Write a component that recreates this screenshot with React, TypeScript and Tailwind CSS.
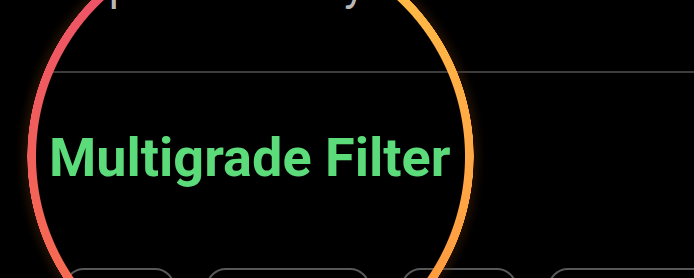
import React from "react";

export default function App() {
  const pills = [111, 164, 116, 200];
  return (
    <div className="relative w-[694px] h-[278px] overflow-hidden bg-black font-['Roboto',sans-serif]">
      <div className="flex flex-col">
        <div className="-mt-[37px] pl-[62px] text-[44px] leading-[44px] text-[#b8b8b8] whitespace-nowrap">
          Exposure Study
        </div>
        <div className="mt-[64px] ml-[50px] h-[2px] bg-[#3c3c3c]" />
        <h1 className="mt-[58px] pl-[49px] text-[54px] leading-[54px] font-bold text-[#5cdb7a] whitespace-nowrap">
          Multigrade Filter
        </h1>
        <div className="mt-[83px] ml-[64px] flex gap-[31px]">
          {pills.map((w, i) => (
            <div
              key={i}
              style={{ width: w }}
              className="h-[44px] shrink-0 rounded-[20px] border-2 border-[#585858]"
            />
          ))}
        </div>
      </div>

      {/* highlight ring overlay */}
      <div className="pointer-events-none absolute left-[27px] top-[-67px] h-[447px] w-[447px] rounded-full shadow-[0_0_10px_4px_rgba(90,45,15,0.4),inset_0_0_10px_4px_rgba(90,45,15,0.4)]" />
      <div className="pointer-events-none absolute left-[27px] top-[-67px] h-[447px] w-[447px] rounded-full bg-[conic-gradient(from_0deg,#ffc547_0deg,#ffb845_45deg,#ffa846_90deg,#ff9d40_121deg,#fb8348_180deg,#f76a52_239deg,#f1605b_270deg,#ee5466_315deg,#ee5068_345deg,#ffc547_360deg)] [mask:radial-gradient(circle_closest-side,transparent_calc(100%-9.5px),black_calc(100%-8.5px),black_calc(100%-0.5px),transparent_100%)]" />
    </div>
  );
}
